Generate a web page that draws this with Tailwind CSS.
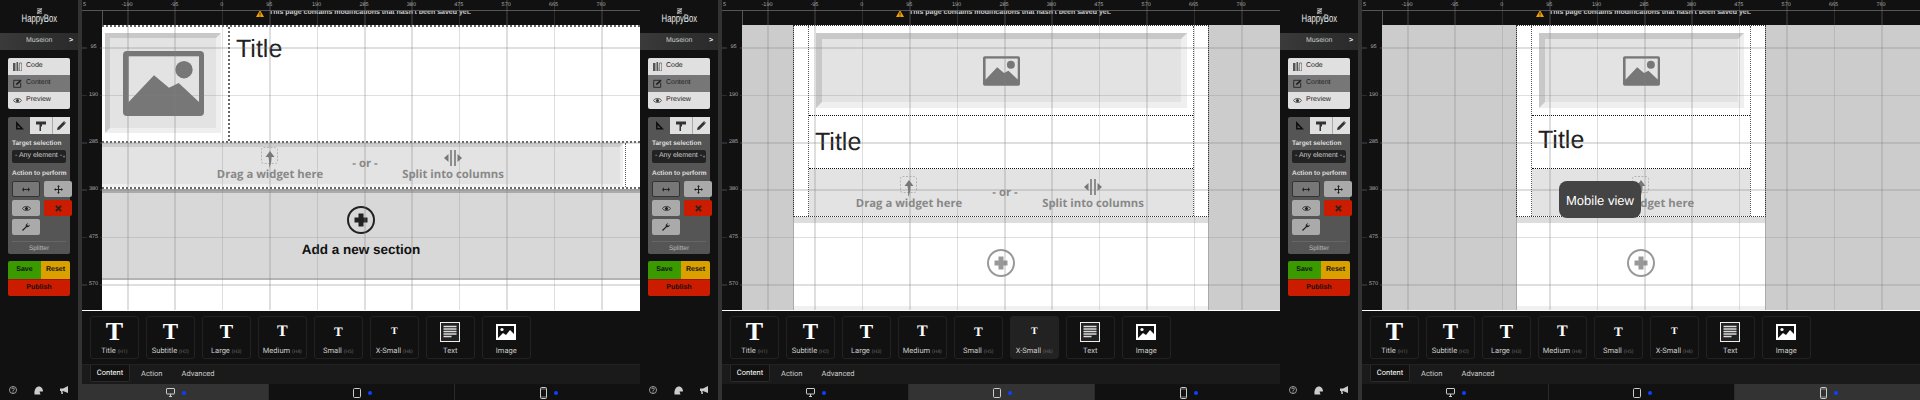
<!DOCTYPE html>
<html lang="en">
<head>
  <meta charset="UTF-8">
  <title>HappyBox</title>
  <script src="https://cdn.jsdelivr.net/npm/@tailwindcss/browser@4"></script>
</head>
<body class="bg-[#111] overflow-hidden">
  <div id="app" class="flex w-[1920px] h-[400px] font-['Liberation_Sans',sans-serif] [text-rendering:geometricPrecision]"></div>

  <script>
    const rulerX = [[-190,45],[-95,92.4],[0,139.8],[95,187.2],[190,234.6],[285,282],[380,329.4],[475,376.8],[570,424.2],[665,471.6],[760,519]];
    const rulerY = [[95,47],[190,94.5],[285,142],[380,189],[475,236.8],[570,284]];

    const imageIcon = (cls) => `<svg viewBox="0 0 81 65" class="${cls}">
      <rect width="81" height="65" rx="4" fill="#777"/>
      <rect x="5.7" y="5.3" width="70.3" height="46" fill="#e3e3e3"/>
      <path d="M5.7 51 L31 24.3 L46 36.7 L55.7 32 L76 51 L76 52 L5.7 52 Z" fill="#777"/>
      <circle cx="61" cy="18.7" r="8.7" fill="#777"/>
    </svg>`;

    const plusIcon = (color) => `<svg viewBox="0 0 28 28" class="w-[28px] h-[28px]">
      <circle cx="14" cy="14" r="13" fill="none" stroke="${color}" stroke-width="2"/>
      <path d="M11.5 7.5h5v4h4v5h-4v4h-5v-4h-4v-5h4z" fill="${color}"/>
    </svg>`;

    const dragIcon = `<svg viewBox="0 0 18 22" class="w-[18px] h-[22px]">
      <rect x="0.5" y="0.5" width="16" height="16" rx="2" fill="none" stroke="#aaa" stroke-width="0.8" stroke-dasharray="2 1.5"/>
      <path d="M9 4 L13.5 10 H10.5 C10.5 14 10 18 8 21 C8.5 17 8 13 7.5 10 H4.5 Z" fill="#777"/>
    </svg>`;

    const splitIcon = `<svg viewBox="0 0 18 16" class="w-[18px] h-[16px]">
      <path d="M7 0v16M11 0v16" stroke="#777" stroke-width="1.6"/>
      <path d="M0 8l4.5-4v8zM18 8l-4.5-4v8z" fill="#777"/>
    </svg>`;

    const dropLabel = "text-[11.3px] leading-[14px] font-bold font-['Open_Sans',sans-serif] text-[#888] whitespace-nowrap";

    const dragBlock = (x, dy) => `<div class="absolute flex flex-col items-center w-[120px] -translate-x-1/2" style="left:${x}px;top:${dy}px">${dragIcon}<span class="-mt-px ${dropLabel}">Drag a widget here</span></div>`;

    const dropRow = (dragX, orX, splitX, dy) => `
      ${dragBlock(dragX, dy)}
      <div class="absolute -translate-x-1/2 ${dropLabel}" style="left:${orX}px;top:${dy + 10}px">- or -</div>
      <div class="absolute flex flex-col items-center w-[120px] -translate-x-1/2" style="left:${splitX}px;top:${dy + 3}px">${splitIcon}<span class="mt-[2px] ${dropLabel}">Split into columns</span></div>`;

    // desktop view
    const desktopCanvas = `
      <div class="w-full h-full bg-white flex flex-col">
        <div class="h-[116px] flex border-t-2 border-dotted border-[#666]">
          <div class="w-[128px] pl-[3px] pt-[6px] border-r-2 border-dotted border-[#666]">
            <div class="w-[116px] h-[100px] flex items-center justify-center border-[5px] border-t-[#c8c8c8] border-l-[#c8c8c8] border-r-[#efefef] border-b-[#efefef] bg-[#e3e3e3]">${imageIcon('w-[81px] h-[65px]')}</div>
          </div>
          <div class="pl-[6px] pt-[7px] text-[25px] leading-[30px] text-[#222]">Title</div>
        </div>
        <div class="h-[48px] flex border-t-2 border-b-2 border-dotted border-[#666]">
          <div class="relative w-[521px] border-t-[4px] border-r-[3px] border-b-[3px] border-t-[#ccc] border-r-[#efefef] border-b-[#efefef] bg-[#e3e3e3]">${dropRow(168,263,351,0)}</div>
          <div class="border-l border-dotted border-[#555] ml-[2px]"></div>
        </div>
        <div class="h-[91px] flex flex-col items-center pr-[20px] bg-[#d8d8d8] border-t-[4px] border-t-[#aaa] border-b-2 border-b-[#b4b4b4]">
          <div class="mt-[13px]">${plusIcon('#222')}</div>
          <div class="mt-[8px] text-[13.5px] leading-[16px] font-bold text-[#111]">Add a new section</div>
        </div>
      </div>`;

    // tablet and phone views share this
    const narrowCanvas = (pageLeft, pageW, innerW, imgW, titleTop, row) => `
      <div class="w-full h-full bg-[#ccc]">
        <div class="relative h-full bg-white border-x border-[#aaa] flex flex-col" style="margin-left:${pageLeft}px;width:${pageW}px">
          <div class="flex flex-col border border-dotted border-[#333] h-[192px] -mx-px">
            <div class="mx-auto h-full flex flex-col border-x border-dotted border-[#555]" style="width:${innerW}px">
              <div class="h-[90px] shrink-0 border-b border-dotted border-[#111] pt-[7px]">
                <div class="mx-auto h-[75px] flex items-center justify-center border-[6px] border-t-[#c8c8c8] border-l-[#c8c8c8] border-r-[#efefef] border-b-[#efefef] bg-[#e3e3e3]" style="width:${imgW}px">${imageIcon('w-[37px] h-[32px]')}</div>
              </div>
              <div class="h-[53px] shrink-0 border-b border-dotted border-[#111] pl-[6px] text-[25px] leading-[30px] text-[#222]" style="padding-top:${titleTop}px">Title</div>
              <div class="relative flex-1 bg-[#e3e3e3]">${row}</div>
            </div>
          </div>
          <div class="h-[6px] bg-[#ddd]"></div>
          <div class="flex-1 flex justify-center pt-[26px]">${plusIcon('#999')}</div>
          <div class="h-[4px] bg-[#f0f0f0]"></div>
        </div>
      </div>`;

    const btn = (label, icon, cls) => `<div class="h-[17px] flex items-center gap-[4px] pl-[5px] text-[7px] text-[#222] ${cls}">${icon}<span>${label}</span></div>`;
    const icoCode = `<svg viewBox="0 0 9 9" class="w-[9px] h-[9px]"><path d="M0 1h2.5v8H0zM3.5 0H5l.3 9H3.5z" fill="#555"/><path d="M6.3 1h2.500v8H6.300z" fill="none" stroke="#555" stroke-width=".7"/></svg>`;
    const icoEdit = `<svg viewBox="0 0 9 9" class="w-[9px] h-[9px]"><path d="M7 1.300H.7v7h7V3.600" fill="none" stroke="#222" stroke-width=".9"/><path d="M3 6l.3-1.500L7.500.6 8.600 1.700 4.500 5.700z" fill="#222"/></svg>`;
    const icoEye = (c) => `<svg viewBox="0 0 10 7" class="w-[9px] h-[7px]"><path d="M.4 3.500C2.500.5 7.500.5 9.600 3.500 7.500 6.500 2.500 6.500.4 3.500z" fill="none" stroke="${c}" stroke-width=".9"/><circle cx="5" cy="3.500" r="1.700" fill="${c}"/></svg>`;
    const icoSquare = `<svg viewBox="0 0 9 9" class="w-[9px] h-[9px]"><path d="M1 0v8.500h8zM2.600 4.200v2.700h2.700z" fill="#111" fill-rule="evenodd"/></svg>`;
    const icoRoller = `<svg viewBox="0 0 10 10" class="w-[10px] h-[10px]"><path d="M0 .5h10v3H0zM3.500 3.500h2.500v2H5v4.500H3.500z" fill="#333"/></svg>`;
    const icoPencil = `<svg viewBox="0 0 9 9" class="w-[9px] h-[9px]"><path d="M0 9l.6-2.600L6.300.7l2 2L2.600 8.400zM7 0l2 2-.5.5-2-2z" fill="#333"/></svg>`;
    const icoArrows = `<svg viewBox="0 0 9 5" class="w-[8px] h-[5px]"><path d="M0 2.500L2.200 0v1.800h4.600V0L9 2.500 6.800 5V3.200H2.200V5z" fill="#222"/></svg>`;
    const icoMove = `<svg viewBox="0 0 9 9" class="w-[9px] h-[9px]"><path d="M4.500 0l1.400 1.700H5V4h2.300v-.9L9 4.500 7.300 5.900V5H5v2.300h.9L4.500 9 3.100 7.300H4V5H1.700v.9L0 4.500l1.700-1.400V4H4V1.700h-.9z" fill="#222"/></svg>`;
    const icoX = `<svg viewBox="0 0 8 8" class="w-[7px] h-[7px]"><path d="M1 1l6 6M7 1L1 7" stroke="#222" stroke-width="2"/></svg>`;
    const icoWrench = `<svg viewBox="0 0 9 9" class="w-[8px] h-[8px]"><path d="M1 9L0 8l4.200-4.200C3.800 2 5.200.2 7.300.2L5.800 1.700l.4 1.100 1.100.4L8.800 1.700C8.900 3.900 7 5.200 5.200 4.800z" fill="#222"/></svg>`;

    const sidebar = () => `
      <div class="w-[78px] shrink-0 bg-[#111] flex flex-col">
        <div class="h-[33px] flex flex-col items-center pt-[8px]">
          <svg viewBox="0 0 10 7" class="w-[9px] h-[6px]"><path d="M2 1h6L2.500 3.500h5L2 6h6" fill="none" stroke="#ddd" stroke-width=".9"/></svg>
          <span class="text-[11px] leading-[11px] text-[#eee] font-light scale-x-[0.7] whitespace-nowrap">HappyBox</span>
        </div>
        <div class="h-[17px] bg-gradient-to-r from-[#3a3a3a] to-[#2a2a2a] flex items-center text-[7px] text-[#ccc] pl-[26px] pr-[5px] justify-between"><span>Museion</span><span class="font-bold text-white">&gt;</span></div>
        <div class="mt-[8px] mx-[8px] rounded-[2px] overflow-hidden flex flex-col">
          ${btn('Code', icoCode, 'bg-[#e0e0e0]')}
          ${btn('Content', icoEdit, 'bg-[#777]')}
          ${btn('Preview', icoEye('#333'), 'bg-[#e0e0e0]')}
        </div>
        <div class="mt-[8px] mx-[8px] h-[137px] bg-[#555] rounded-[2px] flex flex-col">
          <div class="h-[17px] flex">
            <div class="w-[22px] flex items-center justify-center">${icoSquare}</div>
            <div class="w-[22px] bg-[#e0e0e0] flex items-center justify-center">${icoRoller}</div>
            <div class="flex-1 bg-[#e0e0e0] border-l border-[#aaa] flex items-center justify-center">${icoPencil}</div>
          </div>
          <div class="px-[4px] flex flex-col">
            <div class="mt-[6px] h-[8px] leading-[8px] text-[6.5px] font-bold text-[#ddd] whitespace-nowrap">Target selection</div>
            <div class="mt-[2px] h-[13px] bg-[#222] rounded-[2px] flex items-center justify-between px-[3px] text-[7px] text-[#ccc] whitespace-nowrap"><span>- Any element -</span><span class="text-[4px] text-[#888]">▼</span></div>
            <div class="mt-[7px] h-[8px] leading-[8px] text-[6.5px] font-bold text-[#ddd] whitespace-nowrap">Action to perform</div>
            <div class="mt-[3px] grid grid-cols-[28px_28px] gap-x-[4px] gap-y-[3px]">
              <div class="h-[16px] rounded-[2px] bg-[#777] border border-[#333] flex items-center justify-center">${icoArrows}</div>
              <div class="h-[16px] rounded-[2px] bg-[#aaa] flex items-center justify-center">${icoMove}</div>
              <div class="h-[16px] rounded-[2px] bg-[#aaa] flex items-center justify-center">${icoEye('#222')}</div>
              <div class="h-[16px] rounded-[2px] bg-[#cc1c00] flex items-center justify-center">${icoX}</div>
              <div class="h-[16px] rounded-[2px] bg-[#aaa] flex items-center justify-center">${icoWrench}</div>
            </div>
            <div class="mt-[6px] border-t border-[#666] pt-[3px] text-center text-[6.5px] leading-[8px] text-[#bbb]">Splitter</div>
          </div>
        </div>
        <div class="mt-[7px] mx-[8px] rounded-[2px] overflow-hidden text-[7px] font-bold text-[#111]">
          <div class="flex h-[18px] items-center text-center">
            <div class="w-[33px] h-full bg-[#3a9a00] leading-[18px]">Save</div>
            <div class="flex-1 h-full bg-[#d9a000] leading-[18px]">Reset</div>
          </div>
          <div class="h-[17px] bg-[#cc1c00] border-t border-[#a01600] text-center leading-[16px]">Publish</div>
        </div>
        <div class="mt-auto h-[18px] mb-[1px] flex items-center justify-between px-[9px]">
          <svg viewBox="0 0 9 9" class="w-[8px] h-[8px]"><circle cx="4.500" cy="4.500" r="4" fill="none" stroke="#ccc" stroke-width=".8"/><path d="M3 3.500C3 1.800 6 1.800 6 3.500 6 4.700 4.500 4.500 4.500 6M4.500 6.500v1" fill="none" stroke="#ccc" stroke-width=".9"/></svg>
          <svg viewBox="0 0 9 9" class="w-[9px] h-[9px]"><path d="M.5 8.500C0 3 2.500.5 5 .5S9 3 9 5.500H5.500L6.500 8.500z" fill="#ccc"/></svg>
          <svg viewBox="0 0 9 8" class="w-[9px] h-[8px]"><path d="M0 2.500h3L8 0v7L3 5H2.500L3 8H1.500L1 5H0z" fill="#ccc"/></svg>
        </div>
      </div>`;

    const widgets = [
      ['Title','H1','text-[26px]'],['Subtitle','H2','text-[23px]'],['Large','H3','text-[20px]'],
      ['Medium','H4','text-[16px]'],['Small','H5','text-[13px]'],['X-Small','H6','text-[10px]']
    ];

    const widgetBar = (hover) => `
      <div class="h-[53px] shrink-0 bg-[#111] flex gap-[7.3px] pl-[8px] pt-[5px]">
        ${widgets.map((w, i) => `
          <div class="w-[48.7px] h-[43px] rounded-[3px] border border-[#222] flex flex-col items-center ${i === hover ? 'bg-[#222]' : ''}">
            <div class="h-[29px] flex items-center justify-center font-['Liberation_Serif',serif] font-bold text-white ${w[2]} leading-none">T</div>
            <div class="text-[7.5px] leading-[9px] text-[#ccc] whitespace-nowrap font-['Roboto',sans-serif]">${w[0]} <span class="text-[5px] text-[#666]">(${w[1]})</span></div>
          </div>`).join('')}
        <div class="w-[48.7px] h-[43px] rounded-[3px] border border-[#222] flex flex-col items-center">
          <div class="h-[29px] flex items-center justify-center">
            <svg viewBox="0 0 20 20" class="w-[20px] h-[20px]"><rect width="20" height="20" fill="#eee"/><rect x="1" y="1" width="18" height="18" fill="#222"/><path d="M3.500 4.500h13M3.500 7h13M3.500 9.500h13M3.500 12h13M3.500 14.500h8" stroke="#ddd" stroke-width="1.300"/></svg>
          </div>
          <div class="text-[7.5px] leading-[9px] text-[#ccc] font-['Roboto',sans-serif]">Text</div>
        </div>
        <div class="w-[48.7px] h-[43px] rounded-[3px] border border-[#222] flex flex-col items-center">
          <div class="h-[29px] flex items-center justify-center">
            <svg viewBox="0 0 20 16" class="w-[20px] h-[16px]"><rect width="20" height="16" fill="#fff"/><rect x="2" y="2" width="16" height="12" fill="#111"/><path d="M2 14l5-5 3 2 4-5 4 4v4z" fill="#fff"/><circle cx="6" cy="5.500" r="1.600" fill="#fff"/></svg>
          </div>
          <div class="text-[7.5px] leading-[9px] text-[#ccc] font-['Roboto',sans-serif]">Image</div>
        </div>
      </div>`;

    const tabBar = () => `
      <div class="h-[20px] shrink-0 bg-[#1a1a1a] border-t border-[#222] flex pl-[8px] text-[7.5px] text-[#ccc] font-['Roboto',sans-serif]">
        <div class="w-[40px] h-[17px] bg-[#111] border border-t-0 border-[#2a2a2a] rounded-b-[2px] flex items-center justify-center text-white">Content</div>
        <div class="ml-[11px] h-[17px] flex items-center">Action</div>
        <div class="ml-[19px] h-[17px] flex items-center">Advanced</div>
      </div>`;

    const devices = [
      `<svg viewBox="0 0 9 9" class="w-[9px] h-[9px]"><rect x=".5" y=".5" width="8" height="5.500" rx=".5" fill="none" stroke="#ccc"/><path d="M3 8.500h3M4.500 6v2.500" stroke="#ccc"/></svg>`,
      `<svg viewBox="0 0 8 10" class="w-[8px] h-[10px]"><rect x=".5" y=".5" width="7" height="9" rx="1" fill="none" stroke="#ccc"/></svg>`,
      `<svg viewBox="0 0 7 12" class="w-[7px] h-[12px]"><rect x=".5" y=".5" width="6" height="11" rx="1" fill="none" stroke="#ccc"/><path d="M1 2h5M1 10h5" stroke="#ccc" stroke-width=".6"/></svg>`
    ];

    const deviceBar = (active) => `
      <div class="h-[17px] shrink-0 grid grid-cols-3 bg-[#111]">
        ${devices.map((d, i) => `<div class="flex items-center justify-center gap-[7px] pl-[2px] ${i === active ? 'bg-[#333]' : ''} ${i > 0 ? 'border-l border-[#2a2a2a]' : ''}">${d}<span class="w-[4px] h-[4px] rounded-full bg-[#1040ff]"></span></div>`).join('')}
      </div>`;

    const gridOverlay = () => `
      <div class="absolute inset-0 pointer-events-none">
        ${rulerX.map(p => `<div class="absolute top-0 bottom-0 w-[1.5px] bg-[#80808040]" style="left:${p[1]}px"></div>`).join('')}
        ${rulerY.map(p => `<div class="absolute left-0 right-0 h-[1.5px] bg-[#80808040]" style="top:${p[1]}px"></div>`).join('')}
      </div>`;

    const panel = (canvas, hover, device, extra = '') => `
      <div class="relative w-[640px] h-[400px] shrink-0 flex overflow-hidden">
        ${sidebar()}
        <div class="w-[4px] shrink-0 bg-[#333]"></div>
        <div class="relative flex-1 flex flex-col min-w-0 bg-[#111]">
          <div class="relative h-[11px] shrink-0 border-b border-[#555]">
            ${rulerX.map(p => `<span class="absolute top-[2px] text-[5.5px] leading-[6px] text-[#aaa] -translate-x-1/2" style="left:${p[1]}px">${p[0]}</span>`).join('')}
            <span class="absolute top-[2px] left-[1px] text-[5.5px] leading-[6px] text-[#aaa]">5</span>
          </div>
          <div class="relative h-[14px] shrink-0 ml-[20px] border-l border-[#555] overflow-hidden">
            <div class="absolute left-[153px] -top-[2px] flex items-center gap-[3px] whitespace-nowrap">
              <svg viewBox="0 0 8 7" class="w-[8px] h-[7px]"><path d="M4 0l4 7H0z" fill="#f0a000"/><path d="M4 2.500v2.500M4 5.500v1" stroke="#111" stroke-width=".8"/></svg>
              <span class="ml-[2px] text-[7px] leading-[8px] font-bold text-[#ccc]">This page contains modifications that hasn't been saved yet.</span>
            </div>
          </div>
          <div class="relative h-[285px] shrink-0 pl-[20px]">
            ${canvas}
          </div>
          <div class="absolute top-0 left-0 right-0 h-[310px] pointer-events-none">${gridOverlay()}</div>
          ${rulerY.map(p => `<span class="absolute left-[5px] w-[13px] text-center text-[5.5px] leading-[6px] text-[#aaa] bg-[#111] -translate-y-1/2" style="top:${p[1]}px">${p[0]}</span>`).join('')}
          <div class="h-px shrink-0 bg-white"></div>
          ${widgetBar(hover)}
          ${tabBar()}
          ${deviceBar(device)}
          ${extra}
        </div>
      </div>`;

    document.getElementById('app').innerHTML =
      panel(desktopCanvas, -1, 0) +
      panel(narrowCanvas(51, 416, 386, 371, 11, dropRow(100, 196, 284, 7)), 5, 1) +
      panel(narrowCanvas(134, 250, 220, 205, 9, dragBlock(109, 7)), -1, 2,
        `<div class="absolute left-[197px] top-[181px] w-[82px] h-[37px] rounded-[8px] bg-[#444] flex items-center justify-center text-[13px] text-white pt-[2px]">Mobile view</div>`);
  </script>
</body>
</html>
